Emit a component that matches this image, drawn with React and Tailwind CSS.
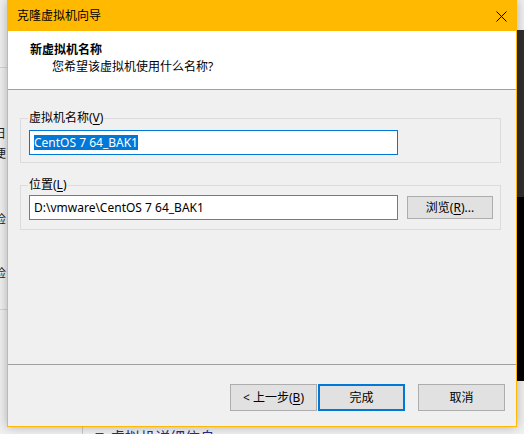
import React from "react"

const font = "font-['Noto_Sans','Noto_Sans_CJK_SC',sans-serif]"

// 左侧被遮挡的窗口碎片
const LeftStrip = () => (
  <div className="w-[7px] shrink-0 overflow-hidden text-[12px] leading-[16px] text-[#222]">
    <div className="mt-[67px] h-px w-full bg-[#d4d4d4]" />
    <div className="mt-[13px] ml-[-6px] whitespace-nowrap text-[#1a5fb4]">：</div>
    <div className="mt-[29px] ml-[-6px] whitespace-nowrap">日</div>
    <div className="mt-[4px] ml-[-6px] whitespace-nowrap">便</div>
    <div className="mt-[50px] ml-[-6px] whitespace-nowrap">检</div>
    <div className="mt-[38px] ml-[-6px] whitespace-nowrap">检</div>
    <div className="mt-[27px] h-px w-full bg-[#d4d4d4]" />
  </div>
)

const RightStrip = () => (
  <div className="w-[7px] shrink-0">
    <div className="mt-[30px] h-[167px] bg-[#2f2f2f]" />
    <div className="h-[184px] bg-black" />
  </div>
)

const Button = ({ children, primary, className = "" }) => (
  <button
    className={`flex items-center justify-center bg-[#e1e1e1] text-[12px] text-black ${
      primary ? "border-2 border-[#0078d7]" : "border border-[#adadad]"
    } ${className}`}
  >
    {children}
  </button>
)

const GroupBox = ({ label, className = "", children }) => (
  <div className={`relative border border-[#dcdcdc] ${className}`}>
    <div className="absolute left-[7px] top-[-9px] bg-[#f0f0f0] px-px text-[12px] leading-[16px] text-black">
      {label}
    </div>
    {children}
  </div>
)

const CloneWizard = () => (
  <div className="relative z-10 flex h-[427px] w-[510px] shrink-0 flex-col border border-[#ffb900] bg-[#f0f0f0] shadow-[0_0_10px_rgba(0,0,0,0.28)]">
    {/* 标题栏 */}
    <div className="flex h-[30px] shrink-0 items-center justify-between bg-[#ffb900] pl-[9px] pr-[9px]">
      <span className="text-[12px] leading-[16px] text-black">克隆虚拟机向导</span>
      <svg width="11" height="11" viewBox="0 0 11 11" className="mr-[0px]">
        <path d="M0.5 0.5 L10.5 10.5 M10.5 0.5 L0.5 10.5" stroke="#000" strokeWidth="1" />
      </svg>
    </div>

    {/* 头部说明 */}
    <div className="h-[58px] shrink-0 bg-white pl-[22px] pt-[11px] text-[12px] leading-[16px] text-black">
      <div className="font-bold">新虚拟机名称</div>
      <div className="mt-px pl-[22px]">您希望该虚拟机使用什么名称?</div>
    </div>
    <div className="h-px shrink-0 bg-[#a0a0a0]" />

    {/* 主体 */}
    <div className="h-[274px] shrink-0 pl-[12px] pr-[15px] pt-[28px]">
      <GroupBox
        label={
          <>
            虚拟机名称(<span className="underline underline-offset-2">V</span>)
          </>
        }
        className="pl-[8px] pt-[11px] pb-[7px]"
      >
        <div className="flex h-[25px] w-[369px] items-center border border-[#0078d7] bg-white pl-[4px]">
          <span className="bg-[#0078d7] text-[12px] leading-[15px] text-white">CentOS 7 64_BAK1</span>
        </div>
      </GroupBox>

      <GroupBox
        label={
          <>
            位置(<span className="underline underline-offset-2">L</span>)
          </>
        }
        className="mt-[22px] pl-[8px] pt-[9px] pb-[9px]"
      >
        <div className="flex items-center">
          <div className="flex h-[25px] w-[369px] items-center border border-[#7a7a7a] bg-white pl-[4px] text-[12px] text-black">
            D:\vmware\CentOS 7 64_BAK1
          </div>
          <Button className="ml-[9px] h-[23px] w-[86px]">
            浏览(<span className="underline underline-offset-2">R</span>)...
          </Button>
        </div>
      </GroupBox>
    </div>
    <div className="h-px shrink-0 bg-[#a0a0a0]" />

    {/* 底部按钮 */}
    <div className="flex flex-1 items-start justify-end pr-[11px] pt-[19px]">
      <Button className="h-[27px] w-[87px]">
        &lt; 上一步(<span className="underline underline-offset-2">B</span>)
      </Button>
      <Button primary className="ml-px h-[27px] w-[87px]">
        完成
      </Button>
      <Button className="ml-[13px] h-[27px] w-[87px]">取消</Button>
    </div>
  </div>
)

export default function App() {
  return (
    <div className={`flex h-[434px] w-[524px] flex-col overflow-hidden bg-[#f0f0f0] ${font}`}>
      <div className="flex items-start">
        <LeftStrip />
        <CloneWizard />
        <RightStrip />
      </div>
      {/* 背后窗口的下一段 */}
      <div className="flex h-[7px] overflow-hidden pl-[82px]">
        <div className="flex h-full items-start gap-[6px] border-l border-[#c8c8c8] pl-[12px] pt-px">
          <span className="text-[9px] leading-[18px] text-[#444]">▼</span>
          <span className="text-[15px] leading-[18px] text-[#2a2a8c]">虚拟机详细信息</span>
        </div>
      </div>
    </div>
  )
}
